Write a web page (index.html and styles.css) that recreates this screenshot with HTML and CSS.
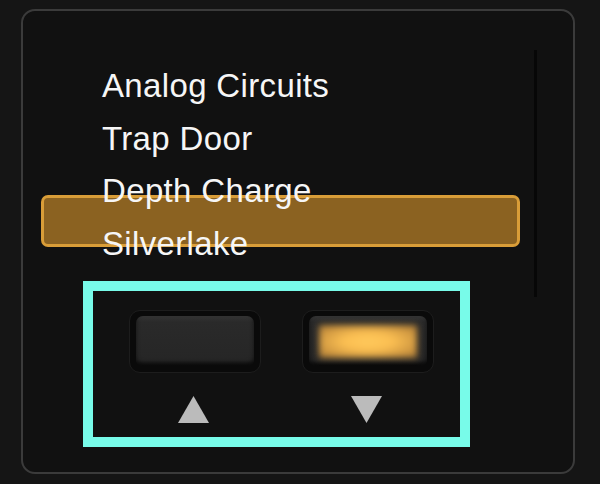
FILE: index.html
```html
<!DOCTYPE html>
<html lang="en">
<head>
    <meta charset="UTF-8">
    <title>Preset Browser</title>
    <link rel="stylesheet" href="styles.css">
</head>
<body>
    <div class="panel">
        <!-- Список пресетов -->
        <div class="list">
            <div class="highlight"></div>
            <div class="item">Analog Circuits</div>
            <div class="item">Trap Door</div>
            <div class="item">Depth Charge</div>
            <div class="item">Silverlake</div>
        </div>

        <!-- Кнопки навигации -->
        <div class="controls">
            <div class="btn"><div class="face"></div></div>
            <div class="btn"><div class="face"><div class="glow"></div></div></div>
            <svg class="arrow" width="31" height="27" viewBox="0 0 31 27"><polygon points="15.5,0 31,27 0,27"/></svg>
            <svg class="arrow" width="31" height="27" viewBox="0 0 31 27"><polygon points="0,0 31,0 15.5,27"/></svg>
        </div>
    </div>
</body>
</html>
```

FILE: styles.css
```css
/* Страница */
body {
    margin: 0;
    background-color: #151515;
    font-family: "Liberation Sans", Arial, sans-serif;
}

/* Рамка панели */
.panel {
    width: 554px;
    height: 465px;
    margin: 9px 0 0 21px;
    box-sizing: border-box;
    border: 2px solid #3b3b3b;
    border-radius: 14px;
    background-color: #111;
    padding-top: 39px;
}

/* Список */
.list {
    position: relative;
    width: 496px;
    height: 247px;
    margin-left: 18px;
    box-sizing: border-box;
    padding: 10px 0 0 61px;
    border-right: 3px solid #070707;
}

.item {
    position: relative;
    color: #f6f6f6;
    font-size: 33px;
    line-height: 52.5px;
    letter-spacing: 0.35px;
}

/* Подсветка выбранного пункта */
.highlight {
    position: absolute;
    left: 0;
    top: 145px;
    width: 479px;
    height: 52px;
    box-sizing: border-box;
    background-color: #8b6221;
    border: 3px solid #d99d38;
    border-radius: 7px;
}

/* Блок кнопок */
.controls {
    position: relative;
    width: 387px;
    margin: -16px 0 0 60px;
    box-sizing: border-box;
    border: 10px solid #78fbe9;
    padding: 19px 0 14px 36px;
    display: grid;
    grid-template-columns: 132px 132px;
    column-gap: 41px;
    row-gap: 23px;
}

.btn {
    height: 63px;
    box-sizing: border-box;
    padding: 5px 6px 6px 6px;
    background-color: #0a0a0a;
    border: 1px solid #1d1d1d;
    border-radius: 11px;
}

.face {
    height: 100%;
    border-radius: 7px;
    background: linear-gradient(#353535, #2a2a2a 12%, #262626 88%, #151515);
    box-shadow: inset 0 -3px 4px rgba(0,0,0,0.6);
    overflow: hidden;
    display: flex;
    align-items: center;
    justify-content: center;
}

/* Светящийся индикатор */
.glow {
    width: 98px;
    height: 33px;
    background: radial-gradient(ellipse at center, #ffc95c 0%, #fbbf52 35%, #c8913e 78%, #9c7236 100%);
    filter: blur(3px);
}

.arrow {
    justify-self: center;
    margin-right: 3px;
    fill: #bbbbbb;
}
```
